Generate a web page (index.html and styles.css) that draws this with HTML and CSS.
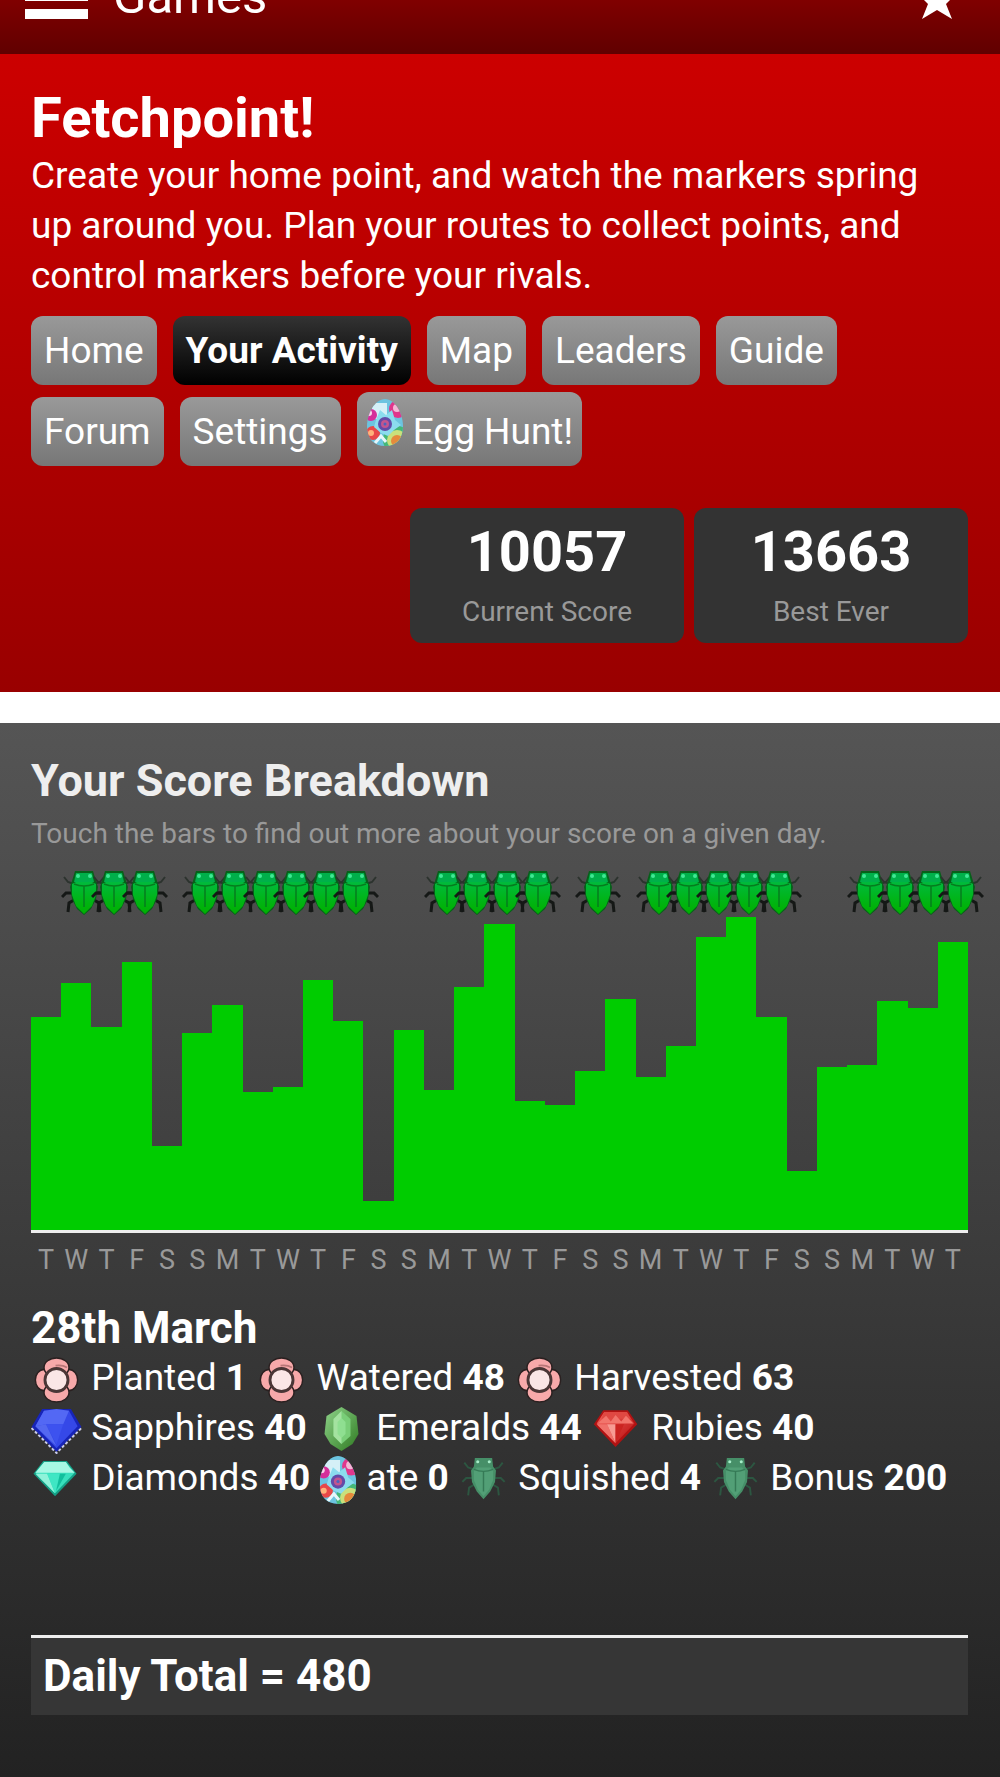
FILE: index.html
```html
<!DOCTYPE html>
<html lang="en">
<head>
<meta charset="utf-8">
<meta name="viewport" content="width=device-width, initial-scale=1">
<title>Games - Fetchpoint!</title>
<link rel="stylesheet" href="styles.css">
</head>
<body>
<svg class="sprite" aria-hidden="true">
  <defs>
    <linearGradient id="beetle" x1="0" y1="0" x2="0" y2="1"><stop offset="0" stop-color="#00ba3c"/><stop offset="0.6" stop-color="#00b414"/><stop offset="1" stop-color="#00b000"/></linearGradient>
    <linearGradient id="ruby" x1="0" y1="0" x2="1" y2="1"><stop offset="0" stop-color="#f4605a"/><stop offset="1" stop-color="#b81010"/></linearGradient>
    <linearGradient id="emerald" x1="0" y1="0" x2="1" y2="1"><stop offset="0" stop-color="#8fd48a"/><stop offset="1" stop-color="#2f7a22"/></linearGradient>
    <clipPath id="shell"><path d="M18 0C28 0 36 15 36 27C36 40 29 47 18 47C7 47 0 40 0 27C0 15 8 0 18 0Z"/></clipPath>
    <symbol id="bug" viewBox="0 0 46 46">
      <path d="M13 14L7 12L3 7M33 14L39 12L43 7" fill="none" stroke="#2c332e" stroke-width="2"/>
      <path d="M11 23L5 23L1 27M35 23L41 23L45 27M13 30L8 33L7 42M33 30L38 33L39 42" fill="none" stroke="#151816" stroke-width="3"/>
      <path d="M14 1H32L35 11L37 17L35 29L30 39L23 45L16 39L11 29L9 17L11 11Z" fill="#07601a"/>
      <path d="M15 3H31L33 12H13Z" fill="#00b04a"/>
      <path d="M11 14L15 12H31L35 14V25L31 36L23 44L15 36L11 25Z" fill="url(#beetle)"/>
      <path d="M13 14Q23 18 33 14M23 16V37" fill="none" stroke="#067c1e" stroke-width="1.5"/>
      <circle cx="17" cy="6" r="2" fill="#3fe894"/><circle cx="29" cy="6" r="2" fill="#3fe894"/>
    </symbol>
    <symbol id="bug-pale" viewBox="-2 0 50 50">
      <path d="M13 14L7 12L3 7M33 14L39 12L43 7M11 23L5 23L1 27M35 23L41 23L45 27M13 30L8 33L7 41M33 30L38 33L39 41" fill="none" stroke="#2c5641" stroke-width="2"/>
      <path d="M14 2H32L33 11L36 15L35 27L30 37L23 45L16 37L11 27L10 15L13 11Z" fill="#468f68"/>
      <path d="M13 15L16 12H30L33 15V25L29 35L23 42L17 35L13 25Z" fill="#529f76"/>
      <path d="M13 14Q23 18 33 14M23 16V37" fill="none" stroke="#357a56" stroke-width="1.500"/>
      <circle cx="17" cy="6" r="1.600" fill="#a6ecc8"/><circle cx="29" cy="6" r="1.600" fill="#a6ecc8"/>
    </symbol>
    <symbol id="flower" viewBox="0 0 50 50">
      <g fill="#f7a9aa" stroke="#2a2020" stroke-width="1.500">
        <ellipse cx="12" cy="25" rx="9" ry="11"/><ellipse cx="38" cy="25" rx="9" ry="11"/>
        <ellipse cx="25" cy="12" rx="13" ry="10"/><ellipse cx="25" cy="38" rx="13" ry="10"/>
      </g>
      <path d="M24 10Q31 9 36 12" stroke="#b87677" stroke-width="2" fill="none"/>
      <circle cx="25" cy="25" r="12" fill="#fae6e6" stroke="#4a3636" stroke-width="3"/>
    </symbol>
    <symbol id="sapphire" viewBox="0 0 52 50">
      <path d="M11 3H41L52 22L26 48L0 22Z" fill="#1724b8"/>
      <path d="M13 5H39L48 21L26 44L4 21Z" fill="#3548e8"/>
      <path d="M13 5L26 3L39 5L33 19H15L4 21Z" fill="#5368f4"/>
      <path d="M15 19H33L26 40Z" fill="#3d52ef"/><path d="M4 21L15 19L26 42Z" fill="#5468f0"/>
      <path d="M0 23L26 49L52 23" fill="none" stroke="#c9cbe8" stroke-width="2" stroke-dasharray="3 2"/>
    </symbol>
    <symbol id="emerald-gem" viewBox="0 0 36 48">
      <path d="M18 1L33 10L35 28L29 38L18 45L7 38L1 28L3 10Z" fill="url(#emerald)"/>
      <path d="M18 5L27 13V30L18 38L10 30V13Z" fill="#79ce78"/>
      <path d="M18 5V38L10 30V13Z" fill="#a4e2a0"/><path d="M18 12L22 16V28L18 32L14 28V16Z" fill="#8fdf91"/>
    </symbol>
    <symbol id="ruby-gem" viewBox="-1 -1 54 48">
      <path d="M12 2H38L48 17L25 41L2 17Z" fill="#b01212"/>
      <path d="M13 4H37L45 16L25 37L5 16Z" fill="url(#ruby)"/>
      <path d="M13 4H37L41 11H10Z" fill="#e04842"/><path d="M5 17H16L25 37Z" fill="#f0716a"/>
      <path d="M16 17H25V37Z" fill="#f79b93"/><path d="M25 17H34L25 37Z" fill="#cb2421"/>
      <path d="M6 16L15 8L20 14L25 7L31 14L36 8L44 16Z" fill="#f2756c"/>
    </symbol>
    <symbol id="diamond-gem" viewBox="-1 -3 51 49">
      <path d="M11 2H35L45 15L23 38L1 15Z" fill="#159f86"/>
      <path d="M12 3H34L43 14L23 35L3 14Z" fill="#37e0bd"/>
      <path d="M12 3H34L38 9L43 14H3Z" fill="#a7f8e4"/><path d="M3 15H15L23 35Z" fill="#8ff3da"/>
      <path d="M15 15H28L23 35Z" fill="#3fe6c4"/><path d="M28 15L34 15L24 33Z" fill="#12bf9d"/>
    </symbol>
    <symbol id="egg" viewBox="0 0 36 47">
      <g clip-path="url(#shell)">
        <rect width="36" height="47" fill="#6cc4e0"/>
        <path d="M5 4H20V20H5Z" fill="#d5f0f7"/>
        <circle cx="31" cy="10" r="9" fill="#e0368c"/><circle cx="30" cy="9" r="4" fill="#f2b8d6"/>
        <circle cx="4" cy="16" r="6" fill="#d62f9a"/><circle cx="2" cy="14" r="3" fill="#f6d8ea"/>
        <circle cx="6" cy="34" r="7" fill="#e84848"/><circle cx="4" cy="34" r="3" fill="#ffb27a"/>
        <circle cx="30" cy="41" r="14" fill="#44b878"/><circle cx="30" cy="41" r="10" fill="#c9e07c"/><circle cx="30" cy="42" r="6" fill="#e58a3c"/>
        <path d="M9 21L13 11L19 16L25 11L28 21L34 26L27 31L21 37L14 34L7 28Z" fill="#8bdcee"/>
        <circle cx="18" cy="25" r="7" fill="#634ba8"/><circle cx="18" cy="25" r="4" fill="#c2558f"/><circle cx="18" cy="25" r="1.500" fill="#4a63c0"/>
        <path d="M8 44L14 37L19 43" fill="none" stroke="#e7f6fa" stroke-width="3"/>
      </g>
    </symbol>
  </defs>
</svg>

<header class="topbar">
  <button class="menu" type="button" aria-label="Menu"><span class="menu-line"></span><span class="menu-line"></span><span class="menu-line"></span></button>
  <span class="topbar-title">Games</span>
  <button class="star" type="button" aria-label="Favourite"><svg viewBox="0 0 36 36"><path d="M18 0L23 12H36L27 21L33 36L18 27L3 36L9 21L0 12H13Z" fill="#fff"/></svg></button>
</header>

<section class="hero">
  <h1 class="hero-title">Fetchpoint!</h1>
  <p class="hero-text">Create your home point, and watch the markers spring up around you. Plan your routes to collect points, and control markers before your rivals.</p>
  <nav class="tabs">
    <a class="tab" href="#home">Home</a>
    <a class="tab tab-active" href="#activity" aria-current="page">Your Activity</a>
    <a class="tab" href="#map">Map</a>
    <a class="tab" href="#leaders">Leaders</a>
    <a class="tab" href="#guide">Guide</a>
    <a class="tab" href="#forum">Forum</a>
    <a class="tab" href="#settings">Settings</a>
    <a class="tab tab-egg" href="#egg-hunt"><svg class="tab-icon"><use href="#egg"/></svg>Egg Hunt!</a>
  </nav>
  <div class="scores">
    <div class="score"><strong class="score-value">10057</strong><span class="score-label">Current Score</span></div>
    <div class="score"><strong class="score-value">13663</strong><span class="score-label">Best Ever</span></div>
  </div>
</section>

<main class="breakdown">
  <h2 class="breakdown-title">Your Score Breakdown</h2>
  <p class="hint">Touch the bars to find out more about your score on a given day.</p>
  <div class="chart" id="chart"></div>
  <h3 class="day-title">28th March</h3>
  <div class="stats">
    <div class="stat-line">
      <svg class="icon"><use href="#flower"/></svg> Planted <b>1</b>
      <svg class="icon"><use href="#flower"/></svg> Watered <b>48</b>
      <svg class="icon"><use href="#flower"/></svg> Harvested <b>63</b>
    </div>
    <div class="stat-line">
      <svg class="icon"><use href="#sapphire"/></svg> Sapphires <b>40</b>
      <svg class="icon"><use href="#emerald-gem"/></svg> Emeralds <b>44</b>
      <svg class="icon"><use href="#ruby-gem"/></svg> Rubies <b>40</b>
    </div>
    <div class="stat-line">
      <svg class="icon"><use href="#diamond-gem"/></svg> Diamonds <b>40</b>
      <svg class="icon icon-egg"><use href="#egg"/></svg> ate <b>0</b>
      <svg class="icon"><use href="#bug-pale"/></svg> Squished <b>4</b>
      <svg class="icon"><use href="#bug-pale"/></svg> Bonus <b>200</b>
    </div>
  </div>
  <div class="total">Daily Total = 480</div>
</main>
<script src="chart.js"></script>
</body>
</html>
```
FILE: styles.css
```css
* { box-sizing: border-box; }
body { margin: 0; font-family: Roboto, "Noto Sans", sans-serif; font-size: 37px; line-height: 50px; color: #fff; background: #fff; }
h1, h2, h3, p { margin: 0; }
button { border: 0; padding: 0; background: none; }
.sprite { position: absolute; width: 0; height: 0; }

.topbar { display: flex; align-items: flex-start; height: 54px; padding: 0 45px 0 25px; background: linear-gradient(#800000, #600000); overflow: hidden; }
.menu { display: flex; flex-direction: column; gap: 8px; margin-top: -27px; }
.menu-line { width: 63px; height: 10px; background: #fff; }
.topbar-title { flex: 1; margin: -28px 0 0 25px; font-size: 49px; }
.star { margin-top: -17px; }
.star svg { display: block; width: 36px; height: 36px; }

.hero { padding: 32px 32px 49px 31px; background: linear-gradient(#cc0000, #990000); }
.hero-title { font-size: 56px; line-height: 65px; }
.tabs { display: flex; flex-wrap: wrap; align-items: flex-end; column-gap: 16px; row-gap: 7px; padding-top: 15px; }
.tab { height: 69px; padding: 10px 13px; border-radius: 12px; background: linear-gradient(#999, #777); color: #fff; text-decoration: none; }
.tab-active { background: linear-gradient(#333, #000); font-weight: bold; }
.tab-egg { display: flex; height: 74px; padding: 15px 9px 9px 8px; }
.tab-icon { width: 40px; height: 47px; margin: -8px 8px 0 0; }
.scores { display: flex; justify-content: flex-end; gap: 10px; margin-top: 42px; }
.score { display: flex; flex-direction: column; width: 274px; height: 135px; padding: 12px 0 8px; border-radius: 12px; background: #333; text-align: center; }
.score-value { font-size: 56px; line-height: 65px; }
.score-label { color: #999; font-size: 28px; line-height: 54px; }

.breakdown { min-height: 1054px; margin-top: 31px; padding: 32px 32px 62px 31px; background: linear-gradient(#555, #222); }
.breakdown-title { font-size: 45px; line-height: 52px; color: #eee; }
.hint { color: #999; font-size: 28px; line-height: 53px; }
.chart { display: grid; grid-template-columns: repeat(31, 1fr); }
.day { display: flex; flex-direction: column; min-width: 0; padding: 0; color: #999; font: inherit; font-size: 27px; }
.day-bug { height: 46px; margin-top: 10px; }
.day-bug svg { display: block; width: 46px; height: 46px; }
.day-plot { display: flex; align-items: flex-end; width: 100%; height: 317px; border-bottom: 3px solid #eee; }
.day-bar { width: 100%; background: #00cc00; }
.day-name { width: 100%; text-align: center; line-height: 54px; }
.day-title { margin-top: 16px; font-size: 44px; line-height: 50px; }
.stats { min-height: 282px; }
.stat-line { white-space: nowrap; }
.icon { width: 51px; height: 48px; margin: -4px 0; vertical-align: middle; }
.icon-egg { width: 38px; }
.total { padding: 12px; border-top: 3px solid #eee; background: #363636; font-size: 44px; font-weight: bold; line-height: 53px; }
```
FILE: chart.js
```js
// One entry per day: weekday, bar height, whether a bug was squished.
const names = "TWTFSSMTWTFSSMTWTFSSMTWTFSSMTWT";
const heights = [213, 247, 203, 268, 84, 197, 225, 138, 143, 250, 209, 29, 200, 140, 243, 306, 129, 125, 159, 231, 153, 184, 293, 313, 213, 59, 163, 165, 229, 222, 288];
const bugs = new Set([1, 2, 3, 5, 6, 7, 8, 9, 10, 13, 14, 15, 16, 18, 20, 21, 22, 23, 24, 27, 28, 29, 30]);
document.getElementById("chart").innerHTML = heights.map((h, i) => `
  <button class="day" type="button">
    <span class="day-bug">${bugs.has(i) ? '<svg><use href="#bug"/></svg>' : ""}</span>
    <span class="day-plot"><span class="day-bar" style="height:${h}px"></span></span>
    <span class="day-name">${names[i]}</span>
  </button>`).join("");
```
